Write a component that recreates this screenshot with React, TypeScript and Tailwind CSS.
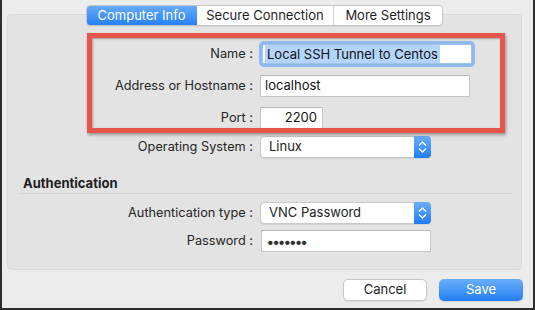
import React from "react";

const font = { fontFamily: "Inter, 'Liberation Sans', sans-serif" };

function Stepper() {
  return (
    <div className="w-[17px] self-stretch -my-px -mr-px rounded-r-[4px] bg-gradient-to-b from-[#6aaefb] to-[#1c7cf2] flex items-center justify-center">
      <svg width="9" height="14" viewBox="0 0 9 14" fill="none" stroke="white" strokeWidth="1.4" strokeLinecap="round" strokeLinejoin="round">
        <path d="M1.5 5 L4.5 2 L7.5 5" />
        <path d="M1.5 9 L4.5 12 L7.5 9" />
      </svg>
    </div>
  );
}

function Row({ label, children, className = "" }: { label: string; children: React.ReactNode; className?: string }) {
  return (
    <div className={"flex items-center " + className}>
      <div className="w-[246px] text-right text-[12.75px] text-[#262626] pr-[1px]">{label}</div>
      <div className="ml-[6px] flex items-center">{children}</div>
    </div>
  );
}

function Select({ value }: { value: string }) {
  return (
    <div className="w-[171px] h-[22px] bg-white border border-[#c9c9c9] rounded-[4px] shadow-[0_1px_1px_rgba(0,0,0,0.08)] flex items-center">
      <div className="flex-1 pl-[8px] text-[13px] text-[#222]">{value}</div>
      <Stepper />
    </div>
  );
}

export default function App() {
  return (
    <div style={font} className="relative w-[535px] h-[310px] bg-[#ececec] border-l-2 border-r-2 border-b-2 border-[#2e2e2e] overflow-hidden">
      {/* Tabs */}
      <div className="relative z-10 pt-[5px] pl-[84px] flex">
        <div className="flex h-[21px] bg-white border border-[#c6c6c6] rounded-[4px] shadow-[0_1px_1px_rgba(0,0,0,0.06)] text-[13px] overflow-hidden">
          <div className="w-[111px] -my-px -ml-px flex items-center justify-center text-white bg-gradient-to-b from-[#68adfa] to-[#1f7ef3] rounded-l-[4px]">Computer Info</div>
          <div className="w-[137px] flex items-center justify-center text-[#1e1e1e] border-r border-[#d4d4d4]">Secure Connection</div>
          <div className="w-[108px] flex items-center justify-center text-[#1e1e1e]">More Settings</div>
        </div>
      </div>

      {/* Panel */}
      <div className="ml-[5px] -mt-[12px] w-[515px] h-[256px] bg-[#e3e3e3] border border-[#d9d9d9] rounded-[4px] pt-[27px]">
        <Row label="Name :" className="h-[24px]">
          <div className="ml-[2px] w-[210px] h-[20px] bg-white border border-[#9fc3ee] ring-[3px] ring-[#8fbaf0] rounded-[2px] flex items-center pl-[2px]">
            <span className="bg-[#b3d4fc] text-[13px] text-[#111] leading-[18px] px-[2px]">Local SSH Tunnel to Centos</span>
          </div>
        </Row>
        <Row label="Address or Hostname :" className="h-[22px] mt-[9px]">
          <div className="w-[210px] h-[22px] bg-white border border-[#c7c7c7] border-t-[#b8b8b8] flex items-center pl-[4px] text-[13px] text-[#111]">localhost</div>
        </Row>
        <Row label="Port :" className="h-[22px] mt-[10px]">
          <div className="w-[63px] h-[22px] bg-white border border-[#c7c7c7] border-t-[#b8b8b8] flex items-center justify-end pr-[5px] text-[13px] text-[#111]">2200</div>
        </Row>
        <Row label="Operating System :" className="h-[22px] mt-[7px]">
          <Select value="Linux" />
        </Row>

        <div className="mt-[17px] pl-[15px] text-[13px] font-bold text-[#1e1e1e] leading-[16px]">Authentication</div>
        <div className="mt-[2px] ml-[11px] mr-[9px] border-b border-[#d3d3d3]" />

        <Row label="Authentication type :" className="h-[22px] mt-[8px]">
          <Select value="VNC Password" />
        </Row>
        <Row label="Password :" className="h-[22px] mt-[6px]">
          <div className="ml-[1px] w-[170px] h-[22px] bg-white border border-[#c7c7c7] border-t-[#b8b8b8] flex items-center pl-[5px] text-[14px] tracking-[-1px] font-bold text-[#333]">•••••••</div>
        </Row>
      </div>

      {/* Buttons */}
      <div className="mt-[9px] pr-[10px] flex justify-end gap-[12px]">
        <div className="w-[84px] h-[22px] bg-white border border-[#c6c6c6] rounded-[5px] shadow-[0_1px_1px_rgba(0,0,0,0.08)] flex items-center justify-center text-[13px] text-[#1e1e1e]">Cancel</div>
        <div className="w-[84px] h-[22px] bg-gradient-to-b from-[#68adfa] to-[#1f7ef3] rounded-[5px] shadow-[0_1px_1px_rgba(0,0,0,0.12)] flex items-center justify-center text-[13px] text-white">Save</div>
      </div>

      {/* Red annotation box */}
      <div className="absolute left-[85px] top-[33px] w-[418px] h-[100px] border-[5px] border-[#e6564a] shadow-[1px_2px_3px_rgba(0,0,0,0.35),inset_1px_1px_2px_rgba(0,0,0,0.3)]" />
    </div>
  );
}
